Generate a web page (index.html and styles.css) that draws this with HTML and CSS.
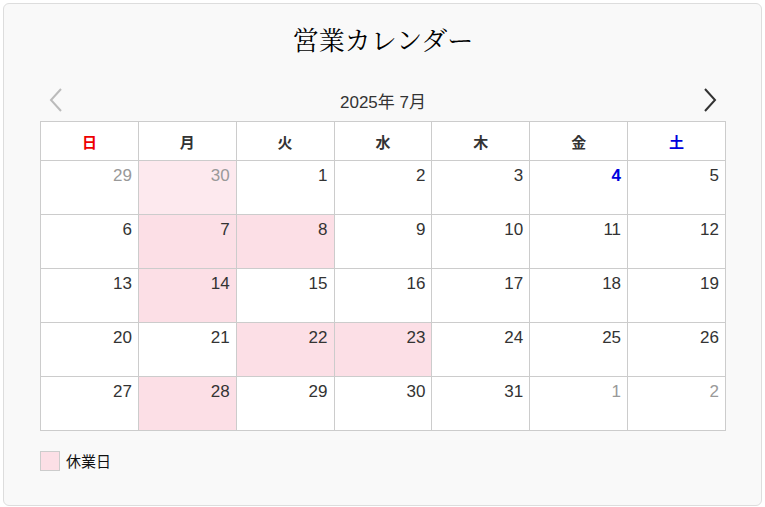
FILE: index.html
```html
<!DOCTYPE html>
<html lang="ja">
<head>
    <meta charset="UTF-8">
    <meta name="viewport" content="width=device-width, initial-scale=1.0">
    <title>営業カレンダー</title>
    <link rel="stylesheet" href="styles.css">
</head>
<body>
    <div class="card">
        <h2 class="title">営業カレンダー</h2>
        <div class="nav">
            <button class="arrow prev" aria-label="前の月">
                <svg width="16" height="26" viewBox="0 0 16 26"><polyline points="13,2 3,13 13,24" fill="none" stroke="currentColor" stroke-width="2"/></svg>
            </button>
            <span class="month">2025年 7月</span>
            <button class="arrow next" aria-label="次の月">
                <svg width="16" height="26" viewBox="0 0 16 26"><polyline points="3,2 13,13 3,24" fill="none" stroke="currentColor" stroke-width="2"/></svg>
            </button>
        </div>
        <table class="calendar">
            <thead>
                <tr>
                    <th class="sun">日</th>
                    <th>月</th>
                    <th>火</th>
                    <th>水</th>
                    <th>木</th>
                    <th>金</th>
                    <th class="sat">土</th>
                </tr>
            </thead>
            <tbody>
                <tr>
                    <td class="other">29</td>
                    <td class="other off">30</td>
                    <td>1</td>
                    <td>2</td>
                    <td>3</td>
                    <td class="today">4</td>
                    <td>5</td>
                </tr>
                <tr>
                    <td>6</td>
                    <td class="off">7</td>
                    <td class="off">8</td>
                    <td>9</td>
                    <td>10</td>
                    <td>11</td>
                    <td>12</td>
                </tr>
                <tr>
                    <td>13</td>
                    <td class="off">14</td>
                    <td>15</td>
                    <td>16</td>
                    <td>17</td>
                    <td>18</td>
                    <td>19</td>
                </tr>
                <tr>
                    <td>20</td>
                    <td>21</td>
                    <td class="off">22</td>
                    <td class="off">23</td>
                    <td>24</td>
                    <td>25</td>
                    <td>26</td>
                </tr>
                <tr>
                    <td>27</td>
                    <td class="off">28</td>
                    <td>29</td>
                    <td>30</td>
                    <td>31</td>
                    <td class="other">1</td>
                    <td class="other">2</td>
                </tr>
            </tbody>
        </table>
        <div class="legend">
            <span class="swatch"></span>
            <span class="legend-label">休業日</span>
        </div>
    </div>
</body>
</html>
```

FILE: styles.css
```css
body {
    margin: 0;
    padding: 3px;
    background-color: #fff;
    font-family: "Liberation Sans", Arial, "Noto Sans CJK JP", sans-serif;
    color: #333;
}
.card {
    height: 461px;
    background-color: #f9f9f9;
    border: 1px solid #ddd;
    border-radius: 6px;
    padding: 20px 35px 20px 36px;
}
.title {
    margin: 2px 0 0;
    text-align: center;
    font-family: "Liberation Serif", "Noto Serif CJK JP", "Noto Sans CJK JP", serif;
    font-size: 26px;
    font-weight: normal;
    line-height: 32px;
    color: #000;
}
/* 月の切り替え */
.nav {
    display: flex;
    align-items: center;
    justify-content: space-between;
    height: 30px;
    margin-top: 27px;
    margin-bottom: 6px;
}
.arrow {
    display: flex;
    align-items: center;
    background: none;
    border: none;
    padding: 0 4px;
    cursor: pointer;
}
.prev {
    color: #bbb;
    margin-left: 4px;
}
.next {
    color: #333;
    margin-right: 4px;
}
.month {
    font-size: 17px;
    color: #333;
}
.calendar {
    width: 100%;
    border-collapse: collapse;
    table-layout: fixed;
    background-color: #fff;
}
.calendar th,
.calendar td {
    border: 1px solid #ccc;
}
.calendar th {
    height: 38px;
    padding: 0;
    font-family: "Noto Sans CJK JP", sans-serif;
    font-size: 15px;
    font-weight: bold;
    color: #333;
}
.calendar th.sun {
    color: #e00;
}
.calendar th.sat {
    color: #00d;
}
.calendar td {
    height: 54px;
    padding: 4px 6px 0 0;
    box-sizing: border-box;
    vertical-align: top;
    text-align: right;
    font-size: 17px;
    line-height: 22px;
    color: #333;
}
.calendar td.other {
    color: #999;
}
.calendar td.off {
    background-color: #fcdfe6;
}
.calendar td.other.off {
    background-color: #fde9ee;
}
.calendar td.today {
    color: #00d;
    font-weight: bold;
}
.legend {
    display: flex;
    align-items: center;
    gap: 6px;
    margin-top: 19px;
}
.swatch {
    width: 18px;
    height: 18px;
    background-color: #fcdfe6;
    border: 1px solid #ccc;
}
.legend-label {
    font-family: "Noto Sans CJK JP", sans-serif;
    font-size: 15px;
    color: #111;
}
```
